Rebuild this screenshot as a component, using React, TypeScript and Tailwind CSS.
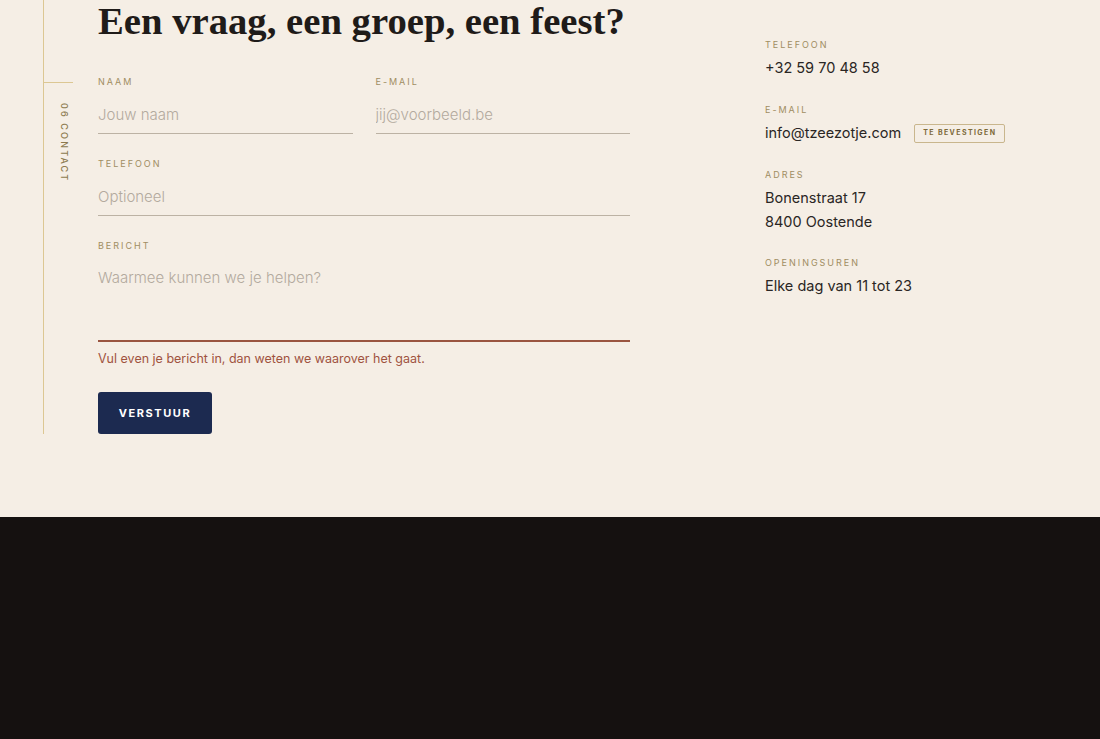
const sans = "font-['Inter','Noto_Sans',sans-serif]";

function Label({ children }: { children: React.ReactNode }) {
  return (
    <div className="text-[9px] leading-[12px] tracking-[0.22em] uppercase text-[#a08d62]">
      {children}
    </div>
  );
}

function Field({ label, placeholder }: { label: string; placeholder: string }) {
  return (
    <div>
      <Label>{label}</Label>
      <input
        className="mt-2 w-full h-[38px] bg-transparent border-b border-[#bcb2a4] text-[15px] font-light text-[#2a2624] placeholder:text-[#b3aa9e] outline-none"
        placeholder={placeholder}
      />
    </div>
  );
}

function InfoBlock({ label, children }: { label: string; children: React.ReactNode }) {
  return (
    <div>
      <Label>{label}</Label>
      <div className="mt-[5px] text-[14.5px] leading-[24px] text-[#2a2624]">{children}</div>
    </div>
  );
}

export default function App() {
  return (
    <div className={`${sans} w-[1100px] min-h-[739px] bg-[#151110]`}>
      <section className="h-[517px] bg-[#f5eee5] flex">
        {/* side rail */}
        <div className="w-[43px]" />
        <div className="w-[55px] h-[434px] border-l border-[#dcc793] flex flex-col">
          <div className="mt-[82px] w-[29px] h-px bg-[#dcc793]" />
          <div className="mt-[20px] ml-[14px] self-start [writing-mode:vertical-rl] text-[9px] leading-[12px] tracking-[0.24em] font-medium text-[#8c7a4e]">
            06 CONTACT
          </div>
        </div>

        {/* form */}
        <div className="w-[532px]">
          <h1 className="-mt-[2px] whitespace-nowrap font-['Liberation_Serif',serif] font-bold text-[38.7px] leading-[46px] text-[#1f1b19]">
            Een vraag, een groep, een feest?
          </h1>
          <div className="mt-[32px] grid grid-cols-2 gap-x-[23px]">
            <Field label="Naam" placeholder="Jouw naam" />
            <Field label="E-mail" placeholder="jij@voorbeeld.be" />
          </div>
          <div className="mt-6">
            <Field label="Telefoon" placeholder="Optioneel" />
          </div>
          <div className="mt-6">
            <Label>Bericht</Label>
            <textarea
              className="mt-2 block w-full h-[82px] pt-[8px] resize-none bg-transparent border-b-2 border-[#9a5540] text-[15px] font-light leading-[20px] text-[#2a2624] placeholder:text-[#b3aa9e] outline-none"
              placeholder="Waarmee kunnen we je helpen?"
            />
          </div>
          <p className="mt-[9px] text-[12.5px] leading-[16px] text-[#a0533f]">
            Vul even je bericht in, dan weten we waarover het gaat.
          </p>
          <button className="mt-[25px] w-[114px] h-[42px] rounded-[3px] bg-[#1c2a50] text-white text-[11px] font-bold tracking-[0.14em]">
            VERSTUUR
          </button>
        </div>

        {/* contact info */}
        <div className="ml-[135px] pt-[39px] flex flex-col gap-[24px]">
          <InfoBlock label="Telefoon">+32 59 70 48 58</InfoBlock>
          <InfoBlock label="E-mail">
            <div className="flex items-center gap-[13px]">
              <span>info@tzeezotje.com</span>
              <span className="h-[19px] px-[8px] flex items-center border border-[#c9b68d] rounded-[2px] text-[7px] font-bold tracking-[0.2em] text-[#7d6a3a]">
                TE BEVESTIGEN
              </span>
            </div>
          </InfoBlock>
          <InfoBlock label="Adres">
            Bonenstraat 17
            <br />
            8400 Oostende
          </InfoBlock>
          <div className="-mt-px">
            <InfoBlock label="Openingsuren">Elke dag van 11 tot 23</InfoBlock>
          </div>
        </div>
      </section>
    </div>
  );
}
